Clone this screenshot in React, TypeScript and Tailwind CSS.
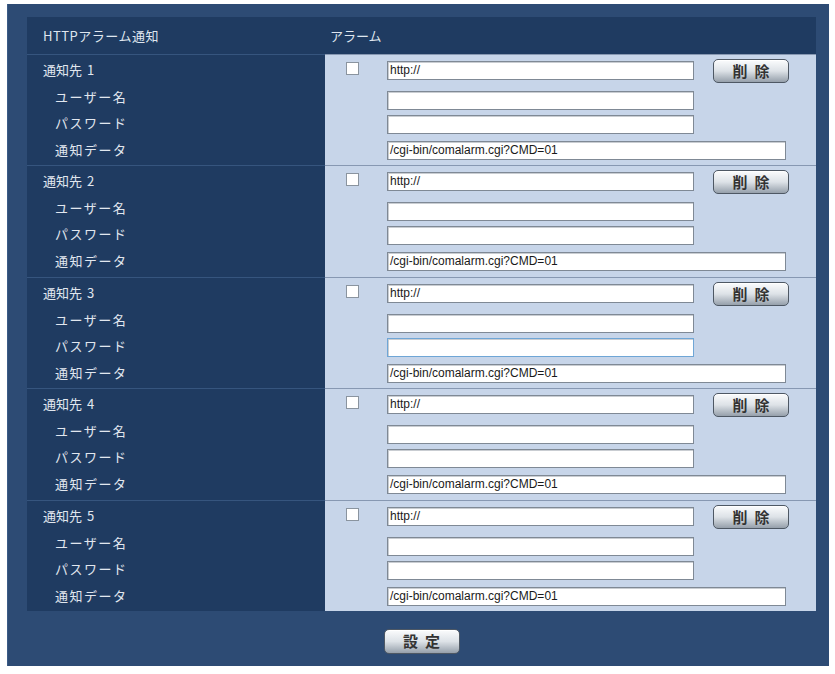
import React from "react";

const jp = { fontFamily: '"Noto Sans CJK JP", "Noto Sans", sans-serif' };
const mono = { fontFamily: '"Liberation Sans", Arial, sans-serif' };

function Field({ w, text, focus }: { w: string; text?: string; focus?: boolean }) {
  return (
    <div
      className={`${w} h-[19px] bg-white border ${focus ? "border-[#6fa6d6]" : "border-[#7f8995]"} shadow-[inset_1px_1px_0_#c9cdd2] pl-[2px] text-[12px] leading-[17px] text-[#1a1a1a] whitespace-nowrap overflow-hidden`}
      style={mono}
    >
      {text}
    </div>
  );
}

function Btn({ label, h }: { label: string; h: string }) {
  return (
    <div
      className={`w-[76px] ${h} rounded-[5px] border border-[#4e5864] bg-gradient-to-b from-[#fbfcfd] via-[#dde2e7] to-[#96a0ab] shadow-[inset_0_1px_0_#ffffff] flex items-center justify-center text-[15px] font-bold text-[#333333] tracking-[7px] pl-[7px]`}
      style={jp}
    >
      {label}
    </div>
  );
}

const rows = [
  { n: "1", h: "h-[111px]", focus: false },
  { n: "2", h: "h-[112px]", focus: false },
  { n: "3", h: "h-[111px]", focus: true },
  { n: "4", h: "h-[112px]", focus: false },
  { n: "5", h: "h-[111px]", focus: false },
];

export default function App() {
  return (
    <div className="min-h-screen bg-white pt-[4px] pl-[7px]">
      <div className="w-[822px] h-[662px] bg-[#2d4b74] border-l border-[#3b5b86] pt-[13px] pl-[19px] flex flex-col">
        <div className="w-[789px] bg-[#1f3b61]">
          <div className="h-[37px] flex items-center text-[13px] text-[#dfe6ef]" style={jp}>
            <div className="w-[298px] pl-[16px] tracking-[0.5px]">HTTPアラーム通知</div>
            <div className="pl-[5px]">アラーム</div>
          </div>
          {rows.map((r) => (
            <div key={r.n} className={`${r.h} flex`}>
              <div
                className="w-[298px] border-t border-[#36557e] pl-[16px] pt-[2px] text-[13px] text-[#e1e7ef] flex flex-col"
                style={jp}
              >
                <div className="h-[26px] leading-[26px]">
                  通知先<span className="ml-[5px]">{r.n}</span>
                </div>
                <div className="h-[27px] leading-[27px] pl-[12px] tracking-[1.5px]">ユーザー名</div>
                <div className="h-[26px] leading-[26px] pl-[12px] tracking-[1.5px]">パスワード</div>
                <div className="h-[27px] leading-[27px] pl-[12px] tracking-[1.5px]">通知データ</div>
              </div>
              <div className="flex-1 bg-[#c7d5e9] border-t border-[#8798b2] pl-[21px] pt-[4px] flex flex-col">
                <div className="h-[24px] flex items-start">
                  <div className="w-[41px] pt-[3px]">
                    <div className="w-[13px] h-[13px] bg-white border border-[#8a949f]" />
                  </div>
                  <div className="mt-[2px]">
                    <Field w="w-[307px]" text="http://" />
                  </div>
                  <div className="ml-[19px]">
                    <Btn label="削除" h="h-[24px]" />
                  </div>
                </div>
                <div className="pl-[41px] mt-[8px]">
                  <Field w="w-[307px]" />
                </div>
                <div className="pl-[41px] mt-[5px]">
                  <Field w="w-[307px]" focus={r.focus} />
                </div>
                <div className="pl-[41px] mt-[7px]">
                  <Field w="w-[399px]" text="/cgi-bin/comalarm.cgi?CMD=01" />
                </div>
              </div>
            </div>
          ))}
        </div>
        <div className="w-[789px] flex justify-center pt-[18px]">
          <Btn label="設定" h="h-[25px]" />
        </div>
      </div>
    </div>
  );
}
